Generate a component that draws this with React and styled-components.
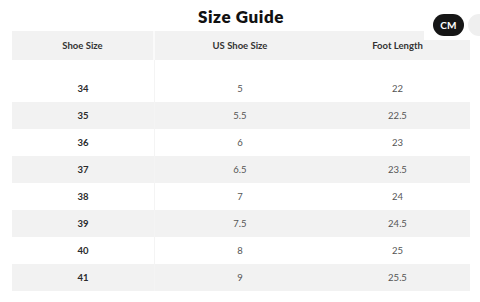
import React from "react";
import styled, { createGlobalStyle } from "styled-components";

const GlobalStyle = createGlobalStyle`
  body {
    margin: 0;
    background: #ffffff;
    font-family: Lato, "Liberation Sans", sans-serif;
  }
`;

const Page = styled.div`
  position: relative;
  width: 480px;
  height: 302px;
  overflow: hidden;
  padding: 0 10px 0 12px;
  box-sizing: border-box;
`;

const Title = styled.h1`
  margin: 0;
  height: 31px;
  line-height: 34px;
  text-align: center;
  font-size: 17px;
  font-weight: 800;
  color: #111;
  letter-spacing: 0.6px;
`;

const UnitToggle = styled.div`
  position: absolute;
  top: 8px;
  left: 424px;
  width: 60px;
  height: 32px;
  background: #ffffff;
  display: flex;
  align-items: flex-start;
  padding: 6px 0 0 9px;
  box-sizing: border-box;
  gap: 4px;
`;

const UnitPill = styled.div`
  flex: none;
  width: 31px;
  height: 22px;
  border-radius: 11px;
  background: ${(p) => (p.$active ? "#161616" : "#efefef")};
  color: ${(p) => (p.$active ? "#fff" : "#333")};
  font-size: 10px;
  font-weight: 700;
  letter-spacing: 0.3px;
  display: flex;
  align-items: center;
  justify-content: center;
`;

const Table = styled.div`
  display: grid;
  grid-template-columns: 143px 170px 145px;
  width: 458px;
`;

const HeadCell = styled.div`
  height: 29px;
  background: #f2f2f2;
  display: flex;
  align-items: center;
  justify-content: center;
  font-size: 9.5px;
  font-weight: 700;
  color: #333;
  border-right: ${(p) => (p.$first ? "2px solid #fafafa" : "none")};
  box-sizing: border-box;
`;

const Spacer = styled.div`
  height: 15px;
  border-right: ${(p) => (p.$first ? "1px solid #f4f4f4" : "none")};
`;

const Cell = styled.div`
  height: 27px;
  background: ${(p) => (p.$shaded ? "#f2f2f2" : "#ffffff")};
  display: flex;
  align-items: center;
  justify-content: center;
  font-size: 9.5px;
  font-weight: ${(p) => (p.$first ? 700 : 400)};
  color: ${(p) => (p.$first ? "#2a2a2a" : "#555")};
  border-right: ${(p) => (p.$first ? "1px solid #f4f4f4" : "none")};
  box-sizing: border-box;
`;

const rows = [
  ["34", "5", "22"],
  ["35", "5.5", "22.5"],
  ["36", "6", "23"],
  ["37", "6.5", "23.5"],
  ["38", "7", "24"],
  ["39", "7.5", "24.5"],
  ["40", "8", "25"],
  ["41", "9", "25.5"],
];

export default function App() {
  return (
    <Page>
      <GlobalStyle />
      <Title>Size Guide</Title>
      <UnitToggle>
        <UnitPill $active>CM</UnitPill>
        <UnitPill aria-label="IN" />
      </UnitToggle>
      <Table>
        <HeadCell $first>Shoe Size</HeadCell>
        <HeadCell>US Shoe Size</HeadCell>
        <HeadCell>Foot Length</HeadCell>
        <Spacer $first />
        <Spacer />
        <Spacer />
        {rows.map((r, i) =>
          r.map((v, j) => (
            <Cell key={`${i}-${j}`} $first={j === 0} $shaded={i % 2 === 1}>
              {v}
            </Cell>
          ))
        )}
      </Table>
    </Page>
  );
}
